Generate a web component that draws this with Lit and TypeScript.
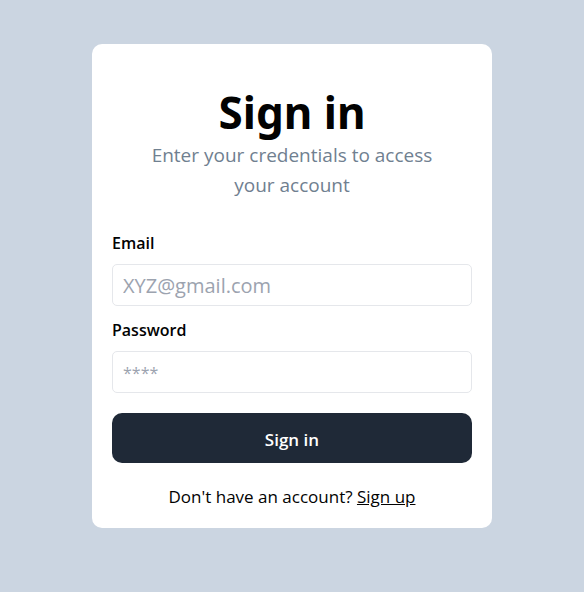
import { LitElement, html, css } from "lit";
import { customElement } from "lit/decorators.js";

@customElement("app-root")
export class AppRoot extends LitElement {
  static styles = css`
    :host {
      display: flex;
      align-items: center;
      justify-content: center;
      min-height: 100vh;
      padding: 44px 24px 64px;
      box-sizing: border-box;
      background: #cbd5e1;
      color: #020202;
      font-family: "Open Sans", "Noto Sans", sans-serif;
      font-size: 16px;
      line-height: 24px;
    }
    * { box-sizing: border-box; }
    .card {
      width: 100%;
      max-width: 400px;
      padding: 40px 20px 17px;
      border-radius: 10px;
      background: #fff;
    }
    header {
      max-width: 300px;
      margin: 0 auto;
      text-align: center;
    }
    h1 {
      margin: 0;
      font-family: "Noto Sans", sans-serif;
      font-size: 44px;
      line-height: 56px;
      font-weight: 700;
    }
    .lead {
      margin: 0;
      color: #708090;
      font-size: 19px;
      line-height: 30px;
    }
    form {
      display: flex;
      flex-direction: column;
      gap: 20px;
      margin-top: 31px;
    }
    .fields { display: grid; gap: 11px; }
    .field { display: grid; gap: 9px; }
    .field + .field { padding-top: 1px; }
    label { font-weight: 600; }
    input {
      width: 100%;
      height: 42px;
      padding: 1px 10px 0;
      border: 1px solid #e5e7eb;
      border-radius: 5px;
      background: #fff;
      color: inherit;
      font: inherit;
      font-size: 20px;
    }
    input[type="password"] { font-size: 16px; }
    input::placeholder { color: #9ca3af; opacity: 1; }
    button {
      height: 50px;
      padding: 3px 20px 0;
      border: 0;
      border-radius: 10px;
      background: #1f2937;
      color: #fff;
      font: inherit;
      font-size: 17px;
      font-weight: 600;
    }
    .signup {
      margin: 20px 0 0;
      font-size: 17px;
      line-height: 28px;
      text-align: center;
    }
    a { color: inherit; }
  `;

  render() {
    return html`
      <main class="card">
        <header>
          <h1>Sign in</h1>
          <p class="lead">Enter your credentials to access your account</p>
        </header>
        <form>
          <div class="fields">
            <div class="field">
              <label for="email">Email</label>
              <input id="email" type="email" placeholder="XYZ@gmail.com" />
            </div>
            <div class="field">
              <label for="password">Password</label>
              <input id="password" type="password" placeholder="****" />
            </div>
          </div>
          <button type="submit">Sign in</button>
        </form>
        <p class="signup">Don't have an account? <a href="#signup">Sign up</a></p>
      </main>
    `;
  }
}
